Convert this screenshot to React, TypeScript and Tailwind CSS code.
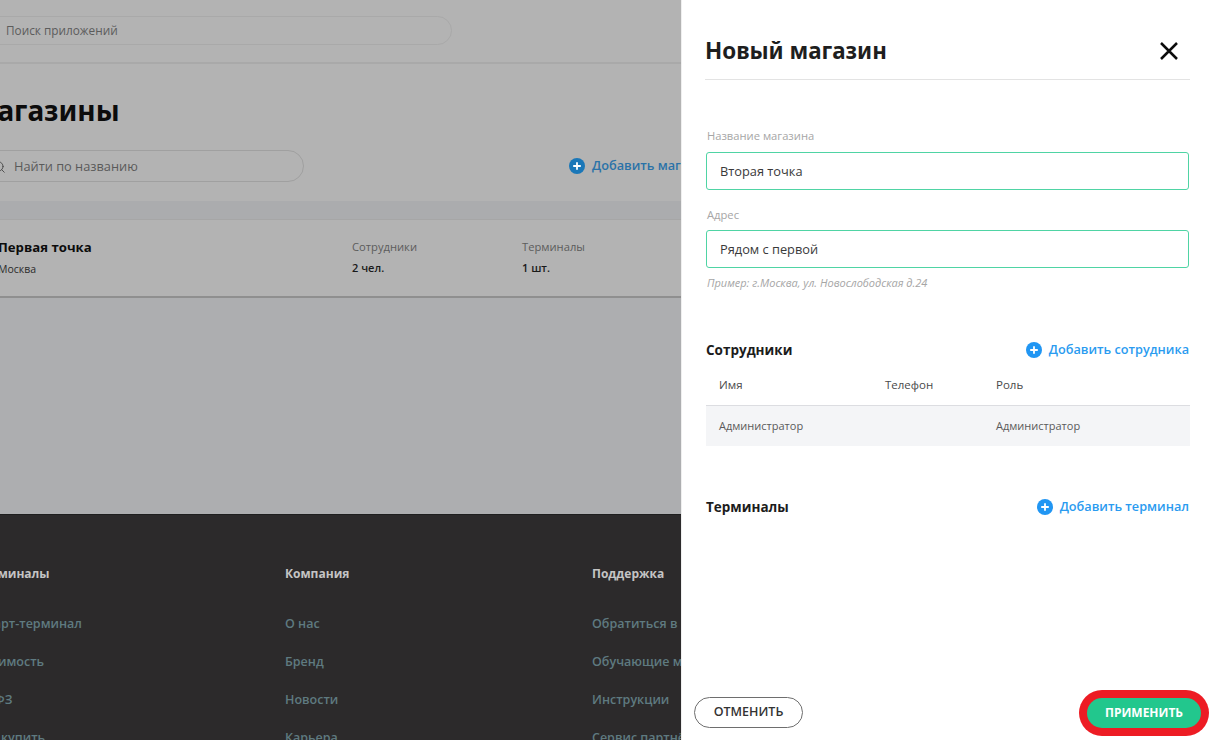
import { Search } from 'lucide-react';

function PlusIcon({ className }: { className: string }) {
  return (
    <svg className={className} viewBox="0 0 16 16" fill="none">
      <circle cx="8" cy="8" r="8" fill="currentColor" />
      <path d="M8 4.2v7.6M4.2 8h7.6" stroke="#fff" strokeWidth="1.8" />
    </svg>
  );
}

function Background() {
  return (
    <div className="w-[681px] h-full shrink-0 overflow-hidden flex flex-col bg-[#adaeb0]">
      {/* top bar */}
      <div className="h-[64px] shrink-0 bg-[#b3b3b3] border-b-2 border-[#a9a9a9] pt-[16px]">
        <div className="w-[482px] h-[29px] -ml-[30px] pl-[35px] pt-[1px] flex items-center rounded-full border border-[#a9a9a9] text-[11.8px] text-[#5c5c5c]">
          Поиск приложений
        </div>
      </div>

      {/* page */}
      <div className="bg-[#b3b3b3] h-[137px] shrink-0 flex flex-col">
        <h1 className="-ml-[29px] mt-[28px] h-[36px] leading-[36px] text-[28px] font-bold text-[#0c0c0c] whitespace-nowrap font-['Noto_Sans',sans-serif]">
          Магазины
        </h1>
        <div className="flex items-center mt-[22px]">
          <div className="w-[330px] h-[32px] -ml-[26px] pl-[17px] pt-[1px] flex items-center gap-[8px] shrink-0 rounded-full border border-[#a0a0a0] text-[12.8px] text-[#5a5a5a]">
            <Search className="w-[14px] h-[14px] text-[#4a4a4a]" strokeWidth={1.6} />
            <span>Найти по названию</span>
          </div>
          <div className="ml-[265px] flex items-center gap-[7px] text-[12.7px] font-semibold text-[#2a72a8] whitespace-nowrap">
            <PlusIcon className="w-[16px] h-[16px] text-[#1a77b8]" />
            Добавить магазин
          </div>
        </div>
      </div>

      {/* table */}
      <div className="h-[19px] shrink-0 bg-[#abacae] border-b border-[#a6a6a6]" />
      <div className="h-[78px] shrink-0 bg-[#b3b3b3] border-b-2 border-[#8f8f8f] -ml-[2px] flex pt-[17px]">
        <div className="w-[354px] shrink-0">
          <div className="text-[13.2px] leading-[20px] font-bold text-[#0c0c0c]">Первая точка</div>
          <div className="mt-[2px] text-[10.5px] leading-[20px] text-[#2b2b2b]">Москва</div>
        </div>
        <div className="w-[170px] shrink-0">
          <div className="text-[11.2px] leading-[20px] text-[#5c5c5c]">Сотрудники</div>
          <div className="mt-[1px] text-[11px] leading-[20px] font-semibold text-[#1a1a1a]">2 чел.</div>
        </div>
        <div>
          <div className="text-[11.2px] leading-[20px] text-[#5c5c5c]">Терминалы</div>
          <div className="mt-[1px] text-[11px] leading-[20px] font-semibold text-[#1a1a1a]">1 шт.</div>
        </div>
      </div>
      <div className="flex-1" />

      {/* footer */}
      <div className="h-[226px] shrink-0 bg-[#2c2a2b] border-t border-[#1f1f1f] -ml-[24px] flex pt-[50px] text-[12.5px] font-semibold whitespace-nowrap">
        <FooterColumn
          className="w-[309px]"
          title="Терминалы"
          links={['Смарт-терминал', 'Стоимость', '54-ФЗ', 'Где купить']}
        />
        <FooterColumn
          className="w-[307px]"
          title="Компания"
          links={['О нас', 'Бренд', 'Новости', 'Карьера']}
        />
        <FooterColumn
          className="w-[307px]"
          title="Поддержка"
          links={['Обратиться в поддержку', 'Обучающие материалы', 'Инструкции', 'Сервис партнёров']}
        />
      </div>
    </div>
  );
}

function FooterColumn({ title, links, className }: { title: string; links: string[]; className: string }) {
  return (
    <div className={`${className} shrink-0`}>
      <div className="h-[18px] leading-[18px] text-[12px] text-[#c4c4c4] font-bold mb-[32px]">{title}</div>
      <div className="flex flex-col gap-[20px] text-[#5f7a80]">
        {links.map((l) => (
          <div key={l} className="h-[18px] leading-[18px]">
            {l}
          </div>
        ))}
      </div>
    </div>
  );
}

function Field({ label, value, className, inputClass }: { label: string; value: string; className: string; inputClass: string }) {
  return (
    <div className={className}>
      <div className="pl-[1px] text-[11.2px] leading-[14px] text-[#a6a6a6]">{label}</div>
      <div className={`${inputClass} mr-[1px] h-[38px] rounded-[3px] border border-[#4fd4a4] px-[13px] pt-[1px] flex items-center text-[12.8px] text-[#3a3a3a]`}>
        {value}
      </div>
    </div>
  );
}

function SectionHeader({ title, action }: { title: string; action: string }) {
  return (
    <div className="flex items-center justify-between h-[20px] mr-[1px]">
      <div className="text-[13.5px] font-bold text-[#1c1c1c]">{title}</div>
      <div className="flex items-center gap-[7px] text-[12.7px] font-semibold text-[#2a9bf0]">
        <PlusIcon className="w-[16px] h-[16px] text-[#2196f3]" />
        {action}
      </div>
    </div>
  );
}

function Panel() {
  return (
    <div className="flex-1 h-full bg-white flex flex-col border-l border-[#efefef]">
      <div className="ml-[23px] mr-[24px] h-[80px] border-b border-[#e3e3e3] pt-[32px] flex justify-between">
        <h2 className="h-[38px] leading-[38px] text-[22.4px] font-bold text-[#1e1e1e] font-['Noto_Sans',sans-serif]">
          Новый магазин
        </h2>
        <svg className="w-[20px] h-[20px] mt-[9px] mr-[11px]" viewBox="0 0 20 20" fill="none">
          <path d="M2 2l16 16M18 2L2 18" stroke="#0c0c0c" strokeWidth="2.5" />
        </svg>
      </div>

      <div className="ml-[24px] mr-[24px] flex flex-col">
        <Field className="mt-[49px]" inputClass="mt-[9px]" label="Название магазина" value="Вторая точка" />
        <Field className="mt-[18px]" inputClass="mt-[8px]" label="Адрес" value="Рядом с первой" />
        <div className="mt-[7px] pl-[1px] h-[16px] leading-[16px] text-[11px] italic text-[#a6a6a6]">
          Пример: г.Москва, ул. Новослободская д.24
        </div>

        <div className="mt-[49px]">
          <SectionHeader title="Сотрудники" action="Добавить сотрудника" />
        </div>
        <div className="mt-[7px] h-[39px] pb-[2px] border-b border-[#dcdde1] grid grid-cols-[179px_111px_1fr] items-center text-[11.5px] text-[#4a4a4a]">
          <span className="pl-[13px]">Имя</span>
          <span>Телефон</span>
          <span>Роль</span>
        </div>
        <div className="h-[40px] bg-[#f4f5f7] grid grid-cols-[179px_111px_1fr] items-center text-[11px] text-[#5a5a5a]">
          <span className="pl-[13px]">Администратор</span>
          <span />
          <span>Администратор</span>
        </div>

        <div className="mt-[51px]">
          <SectionHeader title="Терминалы" action="Добавить терминал" />
        </div>
      </div>

      <div className="mt-auto mb-[12px] ml-[12px] mr-[13px] flex items-center justify-between">
        <button className="w-[109px] h-[31px] rounded-full border border-[#6e6e6e] text-[12.5px] font-semibold text-[#333333]">
          ОТМЕНИТЬ
        </button>
        <button className="w-[114px] h-[30px] rounded-full bg-[#22c78d] ring-[8px] ring-[#ed1c24] text-[12px] font-bold text-white">
          ПРИМЕНИТЬ
        </button>
      </div>
    </div>
  );
}

export default function App() {
  return (
    <div className="w-[1214px] h-[740px] overflow-hidden flex font-['Open_Sans',sans-serif]">
      <Background />
      <Panel />
    </div>
  );
}
